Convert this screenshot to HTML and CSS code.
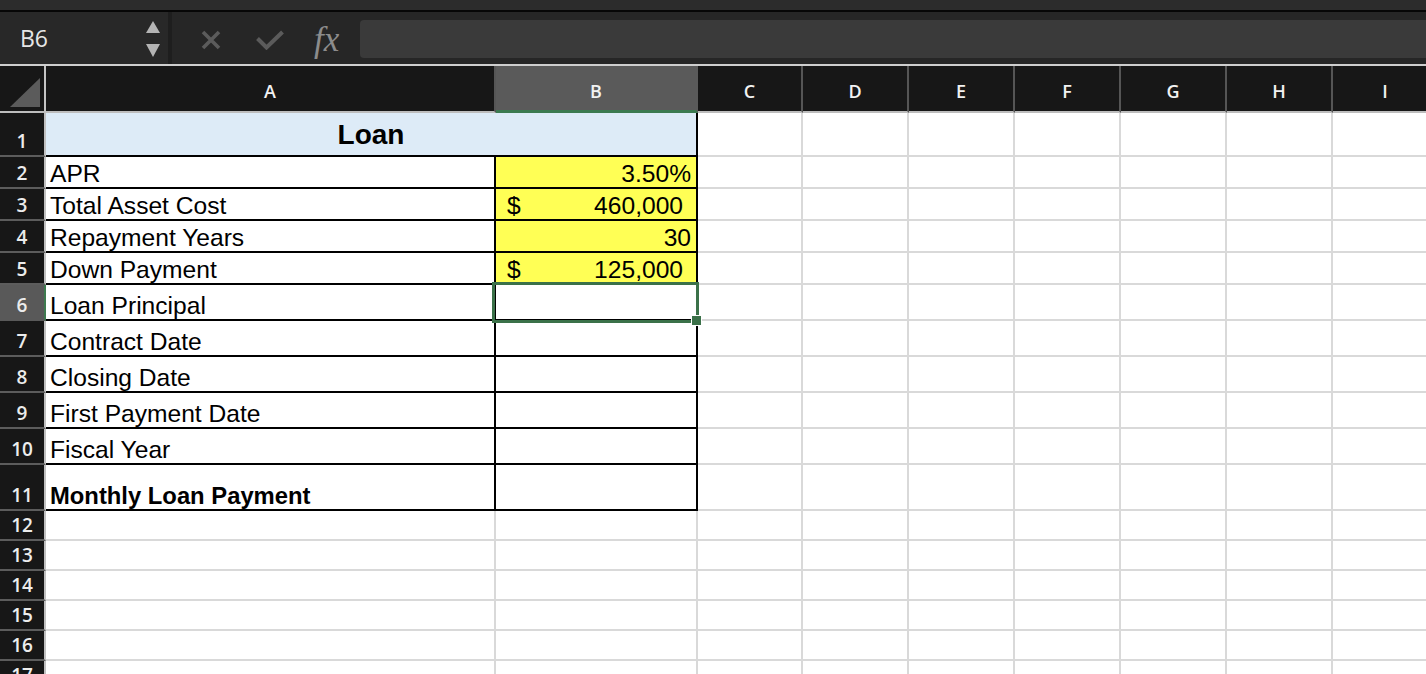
FILE: index.html
```html
<!DOCTYPE html>
<html lang="en">
<head>
<meta charset="utf-8">
<title>Loan</title>
<link rel="stylesheet" href="styles.css">
</head>
<body>
<div class="app">
  <div class="topstrip"></div>
  <div class="fbar">
    <div class="namebox">
      <span class="nb-text">B6</span>
      <svg class="nb-arrows" width="14" height="36" viewBox="0 0 14 36"><polygon points="7,0 14,12 0,12" fill="#b4b4b4"/><polygon points="0,23 14,23 7,36" fill="#b4b4b4"/></svg>
    </div>
    <div class="ficons">
      <svg class="ficon-x" width="20" height="20" viewBox="0 0 20 20"><path d="M2 2 L18 18 M18 2 L2 18" stroke="#5b5b5b" stroke-width="3.6" fill="none"/></svg>
      <svg class="ficon-check" width="28" height="20" viewBox="0 0 28 20"><path d="M1.5 8.5 L10.5 17.5 L26.5 2" stroke="#5b5b5b" stroke-width="4" fill="none"/></svg>
      <span class="ficon-fx">fx</span>
    </div>
    <div class="finput"></div>
  </div>
  <div class="divider"></div>
  <div class="sheet">
    <!-- header row -->
    <div class="corner"><svg width="30" height="29" viewBox="0 0 30 29"><polygon points="0,29 30,29 30,0" fill="#5b5b5b"/></svg></div>
    <div class="ch">A</div>
    <div class="ch sel">B</div>
    <div class="ch">C</div>
    <div class="ch">D</div>
    <div class="ch">E</div>
    <div class="ch">F</div>
    <div class="ch">G</div>
    <div class="ch">H</div>
    <div class="ch">I</div>

    <!-- row 1 -->
    <div class="rh">1</div>
    <div class="c title">Loan</div>
    <div class="c"></div><div class="c"></div><div class="c"></div><div class="c"></div><div class="c"></div><div class="c"></div><div class="c"></div>

    <!-- row 2 -->
    <div class="rh">2</div>
    <div class="c bk">APR</div>
    <div class="c bk yel num-r">3.50%</div>
    <div class="c"></div><div class="c"></div><div class="c"></div><div class="c"></div><div class="c"></div><div class="c"></div><div class="c"></div>

    <!-- row 3 -->
    <div class="rh">3</div>
    <div class="c bk">Total Asset Cost</div>
    <div class="c bk yel num-acc"><span>$</span><span>460,000</span></div>
    <div class="c"></div><div class="c"></div><div class="c"></div><div class="c"></div><div class="c"></div><div class="c"></div><div class="c"></div>

    <!-- row 4 -->
    <div class="rh">4</div>
    <div class="c bk">Repayment Years</div>
    <div class="c bk yel num-r">30</div>
    <div class="c"></div><div class="c"></div><div class="c"></div><div class="c"></div><div class="c"></div><div class="c"></div><div class="c"></div>

    <!-- row 5 -->
    <div class="rh">5</div>
    <div class="c bk">Down Payment</div>
    <div class="c bk yel num-acc"><span>$</span><span>125,000</span></div>
    <div class="c"></div><div class="c"></div><div class="c"></div><div class="c"></div><div class="c"></div><div class="c"></div><div class="c"></div>

    <!-- row 6 -->
    <div class="rh sel">6</div>
    <div class="c bk">Loan Principal</div>
    <div class="c bk selcell"><div class="selbox"></div><div class="fillhandle"></div></div>
    <div class="c"></div><div class="c"></div><div class="c"></div><div class="c"></div><div class="c"></div><div class="c"></div><div class="c"></div>

    <!-- row 7 -->
    <div class="rh">7</div>
    <div class="c bk">Contract Date</div>
    <div class="c bk"></div>
    <div class="c"></div><div class="c"></div><div class="c"></div><div class="c"></div><div class="c"></div><div class="c"></div><div class="c"></div>

    <!-- row 8 -->
    <div class="rh">8</div>
    <div class="c bk">Closing Date</div>
    <div class="c bk"></div>
    <div class="c"></div><div class="c"></div><div class="c"></div><div class="c"></div><div class="c"></div><div class="c"></div><div class="c"></div>

    <!-- row 9 -->
    <div class="rh">9</div>
    <div class="c bk">First Payment Date</div>
    <div class="c bk"></div>
    <div class="c"></div><div class="c"></div><div class="c"></div><div class="c"></div><div class="c"></div><div class="c"></div><div class="c"></div>

    <!-- row 10 -->
    <div class="rh">10</div>
    <div class="c bk">Fiscal Year</div>
    <div class="c bk"></div>
    <div class="c"></div><div class="c"></div><div class="c"></div><div class="c"></div><div class="c"></div><div class="c"></div><div class="c"></div>

    <!-- row 11 -->
    <div class="rh">11</div>
    <div class="c bk bold">Monthly Loan Payment</div>
    <div class="c bk"></div>
    <div class="c"></div><div class="c"></div><div class="c"></div><div class="c"></div><div class="c"></div><div class="c"></div><div class="c"></div>

    <!-- rows 12-17 -->
    <div class="rh">12</div>
    <div class="c"></div><div class="c"></div><div class="c"></div><div class="c"></div><div class="c"></div><div class="c"></div><div class="c"></div><div class="c"></div><div class="c"></div>
    <div class="rh">13</div>
    <div class="c"></div><div class="c"></div><div class="c"></div><div class="c"></div><div class="c"></div><div class="c"></div><div class="c"></div><div class="c"></div><div class="c"></div>
    <div class="rh">14</div>
    <div class="c"></div><div class="c"></div><div class="c"></div><div class="c"></div><div class="c"></div><div class="c"></div><div class="c"></div><div class="c"></div><div class="c"></div>
    <div class="rh">15</div>
    <div class="c"></div><div class="c"></div><div class="c"></div><div class="c"></div><div class="c"></div><div class="c"></div><div class="c"></div><div class="c"></div><div class="c"></div>
    <div class="rh">16</div>
    <div class="c"></div><div class="c"></div><div class="c"></div><div class="c"></div><div class="c"></div><div class="c"></div><div class="c"></div><div class="c"></div><div class="c"></div>
    <div class="rh">17</div>
    <div class="c"></div><div class="c"></div><div class="c"></div><div class="c"></div><div class="c"></div><div class="c"></div><div class="c"></div><div class="c"></div><div class="c"></div>
  </div>
</div>
</body>
</html>
```

FILE: styles.css
```css
* { box-sizing: border-box; }
html, body { margin: 0; padding: 0; }
body {
  width: 1426px;
  height: 674px;
  overflow: hidden;
  background: #ffffff;
  font-family: "Liberation Sans", Arial, sans-serif;
}
.app { display: flex; flex-direction: column; width: 1426px; }

/* formula bar */
.topstrip { height: 12px; background: #2c2c2c; border-bottom: 2px solid #060606; }
.fbar { height: 52px; display: flex; background: #262626; }
.namebox {
  width: 172px;
  flex: none;
  background: #282828;
  border-right: 4px solid #1e1e1e;
  display: flex;
  align-items: center;
  justify-content: space-between;
  padding: 0 8px 0 20px;
}
.nb-text {
  font-family: "Open Sans", sans-serif;
  font-size: 23px;
  font-weight: 500;
  line-height: 23px;
  color: #e6e6e6;
  margin-top: 1px;
}
.nb-arrows { display: block; margin-top: 1px; }
.ficons {
  width: 188px;
  flex: none;
  display: flex;
  align-items: center;
  padding-left: 29px;
}
.ficons svg { display: block; flex: none; margin-top: 3px; }
.ficon-x { margin-right: 35px; }
.ficon-check { margin-right: 30px; }
.ficon-fx {
  font-family: "Liberation Serif", "Times New Roman", serif;
  font-style: italic;
  font-size: 35px;
  line-height: 35px;
  color: #8c8c8c;
  margin-top: 2px;
}
.finput {
  flex: 1;
  margin-top: 8px;
  height: 38px;
  background: #3a3a3a;
  border-radius: 4px 0 0 4px;
}
.divider { height: 2px; background: #cecece; }

/* sheet grid */
.sheet {
  display: grid;
  grid-template-columns: 46px 450px 202px 105px repeat(6, 106px);
  grid-template-rows: 47px 44px repeat(4, 32px) repeat(5, 36px) 46px repeat(6, 30px);
}
.corner {
  background: #171717;
  border-right: 2px solid #c4c4c4;
  border-bottom: 2px solid #bdbdbd;
  padding: 12px 0 0 10px;
}
.corner svg { display: block; }
.ch {
  background: #171717;
  border-right: 2px solid #555555;
  border-bottom: 2px solid #bdbdbd;
  color: #f2f2f2;
  font-family: "Open Sans", sans-serif;
  font-weight: 600;
  font-size: 18px;
  line-height: 18px;
  display: flex;
  justify-content: center;
  align-items: flex-end;
  padding-bottom: 11px;
}
.ch.sel {
  background: #5a5a5a;
  border-right-color: #5a5a5a;
  border-bottom: 3px solid #3b7a50;
  padding-bottom: 10px;
}
.rh {
  background: #171717;
  border-right: 2px solid #c0c0c0;
  border-bottom: 2px solid #5c5c5c;
  color: #ececec;
  font-family: "Open Sans", sans-serif;
  font-weight: 600;
  font-size: 19px;
  line-height: 19px;
  display: flex;
  justify-content: center;
  align-items: flex-end;
  padding-bottom: 4px;
}
.rh.sel { background: #595959; border-right-color: #3d7a4f; border-bottom-color: #595959; }

.c {
  background: #ffffff;
  border-right: 2px solid #d9d9d9;
  border-bottom: 2px solid #d9d9d9;
  display: flex;
  align-items: flex-end;
  font-size: 24.6px;
  line-height: 24px;
  color: #000000;
  white-space: nowrap;
  padding: 0 5px 1px 4px;
}
.c.bk { border-right-color: #000000; border-bottom-color: #000000; }
.c.bold { font-weight: bold; font-size: 23.8px; }
.c.yel { background: #ffff55; }
.c.title {
  grid-column: span 2;
  background: #ddebf7;
  border-right-color: #000000;
  border-bottom-color: #000000;
  justify-content: center;
  font-weight: bold;
  font-size: 28px;
  line-height: 28px;
  padding: 0 0 6px 0;
}
.c.num-r { justify-content: flex-end; padding-right: 5px; }
.c.num-acc { justify-content: space-between; padding-left: 11px; padding-right: 13px; }

.selcell { position: relative; }
.selbox {
  position: absolute;
  left: -4px;
  top: -3px;
  width: 207px;
  height: 41px;
  border: 3px solid #3b7149;
}
.fillhandle {
  position: absolute;
  left: 195px;
  top: 30px;
  width: 11px;
  height: 11px;
  background: #3b7149;
  border: 1px solid #ffffff;
}
```
